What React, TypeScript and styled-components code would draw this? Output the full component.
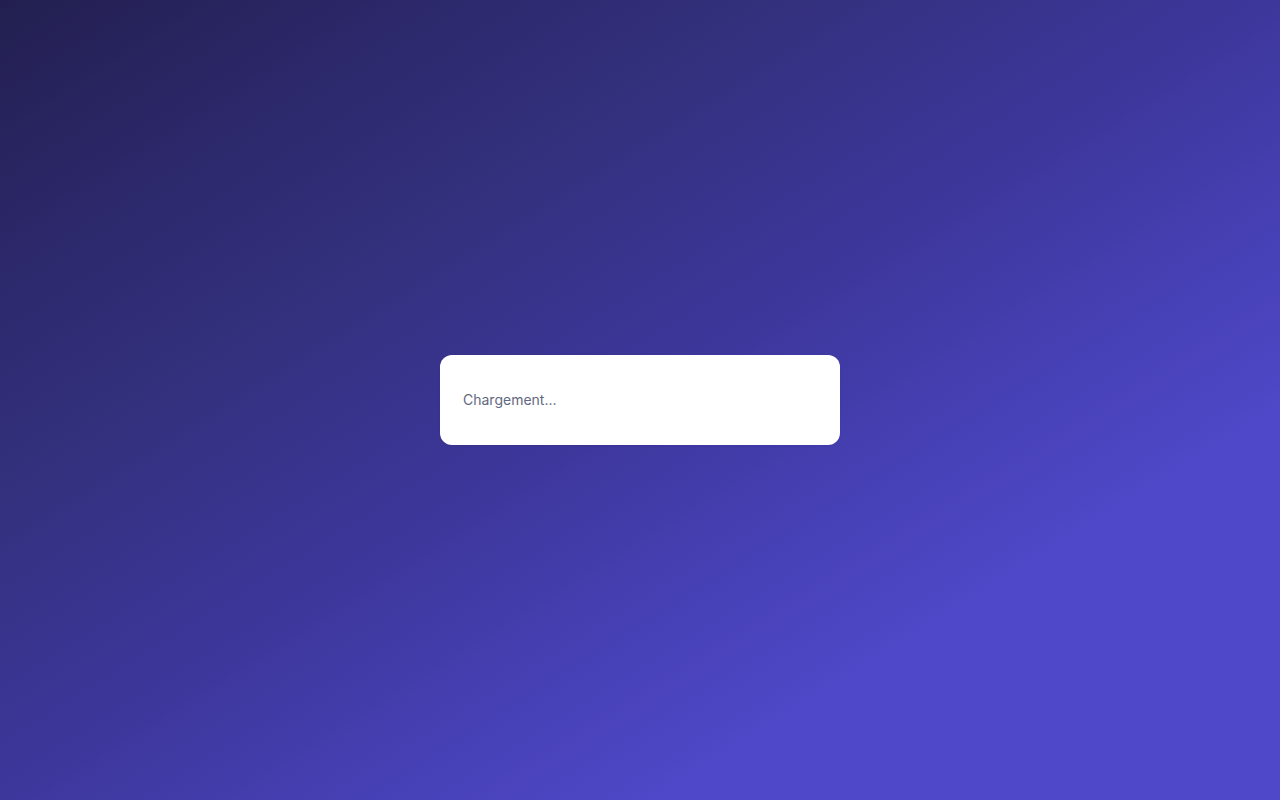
import React from "react";
import styled, { createGlobalStyle } from "styled-components";

const GlobalStyle = createGlobalStyle`
  * {
    box-sizing: border-box;
  }
  html,
  body {
    margin: 0;
    padding: 0;
  }
  body {
    font-family: Inter, "Noto Sans", "Liberation Sans", sans-serif;
  }
`;

const Screen = styled.div`
  display: flex;
  align-items: center;
  justify-content: center;
  min-height: 100vh;
  background: linear-gradient(
    to bottom right,
    #221f50 0%,
    #2e2a70 20%,
    #33307c 30%,
    #3d379c 50%,
    #453fb2 62%,
    #4f48c8 76%,
    #4f48c8 100%
  );
`;

const Card = styled.div`
  width: 400px;
  padding: 36px 23px;
  background: #ffffff;
  border-radius: 12px;
  box-shadow: 0 1px 2px rgba(15, 12, 50, 0.08);
`;

const Message = styled.p`
  margin: 0;
  font-size: 14px;
  line-height: 18px;
  color: #62687f;
`;

export default function App() {
  return (
    <>
      <GlobalStyle />
      <Screen>
        <Card>
          <Message>Chargement...</Message>
        </Card>
      </Screen>
    </>
  );
}
